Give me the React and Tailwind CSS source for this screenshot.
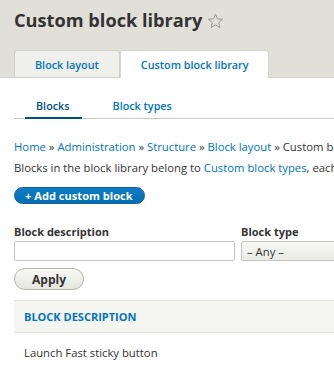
const Star = () => (
  <svg width="17" height="16" viewBox="0 0 17 16" className="ml-[5px] mt-[2px]">
    <path
      d="M8.5 1.2 L10.5 5.9 L15.6 6.3 L11.7 9.6 L12.9 14.6 L8.5 11.9 L4.1 14.6 L5.3 9.6 L1.4 6.3 L6.5 5.9 Z"
      fill="none"
      stroke="#9a9a90"
      strokeWidth="1"
      strokeLinejoin="round"
    />
  </svg>
);

export default function App() {
  return (
    <div className="w-[334px] h-[367px] overflow-hidden bg-white font-['Open_Sans',sans-serif] text-[11.3px] leading-[15px] text-[#333]">
      <div className="w-[640px]">
        {/* Header */}
        <header className="bg-[#e0e0d8] border-b border-[#d2d2cc] pl-[14px] pt-[8px]">
          <h1 className="flex items-center text-[18.2px] leading-[24px] font-bold text-[#333]">
            Custom block library
            <Star />
          </h1>
          <nav className="flex mt-[18px] -mb-px">
            <a className="h-[27px] flex items-center px-[20px] bg-[#efefec] border border-b-0 border-[#d0d0ca] rounded-t-[4px] text-[10.8px] font-semibold text-[#0074bd]">
              Block layout
            </a>
            <a className="h-[28px] flex items-center pl-[20px] pr-[19px] bg-white border border-b-0 border-[#d6d6d0] rounded-t-[4px] text-[10.8px] font-semibold text-[#0074bd]">
              Custom block library
            </a>
          </nav>
        </header>

        <div className="px-[14px]">
          {/* Secondary tabs */}
          <ul className="flex mt-[14px] border-b border-[#c8c8c2]">
            <li className="-mb-px ml-[11px]">
              <a className="block pt-[6px] pb-[4px] pl-[11px] pr-[12px] border-b-2 border-[#004f80] text-[10.8px] font-semibold text-[#004f80]">
                Blocks
              </a>
            </li>
            <li className="-mb-px ml-[20px]">
              <a className="block pt-[6px] pb-[4px] pl-[11px] pr-[12px] border-b-2 border-transparent text-[10.8px] font-semibold text-[#0074bd]">
                Block types
              </a>
            </li>
          </ul>

          {/* Breadcrumb */}
          <p className="mt-[20px] whitespace-nowrap">
            <a className="text-[#0074bd]">Home</a> » <a className="text-[#0074bd]">Administration</a> »{" "}
            <a className="text-[#0074bd]">Structure</a> » <a className="text-[#0074bd]">Block layout</a> » Custom block library
          </p>

          <p className="mt-[6px] whitespace-nowrap">
            Blocks in the block library belong to <a className="text-[#0074bd]">Custom block types</a>, each with its own fields and display settings.
          </p>

          {/* Action */}
          <div className="mt-[12px]">
            <a className="inline-block border border-[#1e5c90] bg-gradient-to-b from-[#0d7ec5] to-[#006fb4] text-white font-bold text-[11.1px] leading-[13px] py-[1px] pl-[10px] pr-[11px] rounded-full">
              + Add custom block
            </a>
          </div>

          {/* Filters */}
          <div className="flex mt-[20px] gap-[6px]">
            <div className="flex flex-col">
              <label className="font-bold text-[11px] mb-[2px]">Block description</label>
              <input className="w-[221px] h-[20px] border border-[#c4c4c0] rounded-[2px] bg-white outline-none" />
            </div>
            <div className="flex flex-col">
              <label className="font-bold text-[11px] mb-[2px]">Block type</label>
              <div className="w-[200px] h-[20px] flex items-center pl-[5px] border border-[#c4c4c0] rounded-[2px] bg-gradient-to-b from-[#f7f7f4] to-[#ebebe6]">
                – Any –
              </div>
            </div>
          </div>

          <button className="mt-[7px] w-[70px] h-[22px] rounded-full border border-[#b4b4ae] bg-gradient-to-b from-[#f8f8f6] to-[#e6e6e0] font-bold text-[12px] text-[#333]">
            Apply
          </button>

          {/* Table */}
          <div className="mt-[10px]">
            <div className="h-[33px] flex items-center pl-[10px] bg-[#f5f5f2] border-t border-b border-[#e4e4df] text-[#0074bd] font-bold uppercase text-[11px]">
              Block description
            </div>
            <div className="h-[38px] flex items-center pl-[10px] pt-[1px]">Launch Fast sticky button</div>
          </div>
        </div>
      </div>
    </div>
  );
}
